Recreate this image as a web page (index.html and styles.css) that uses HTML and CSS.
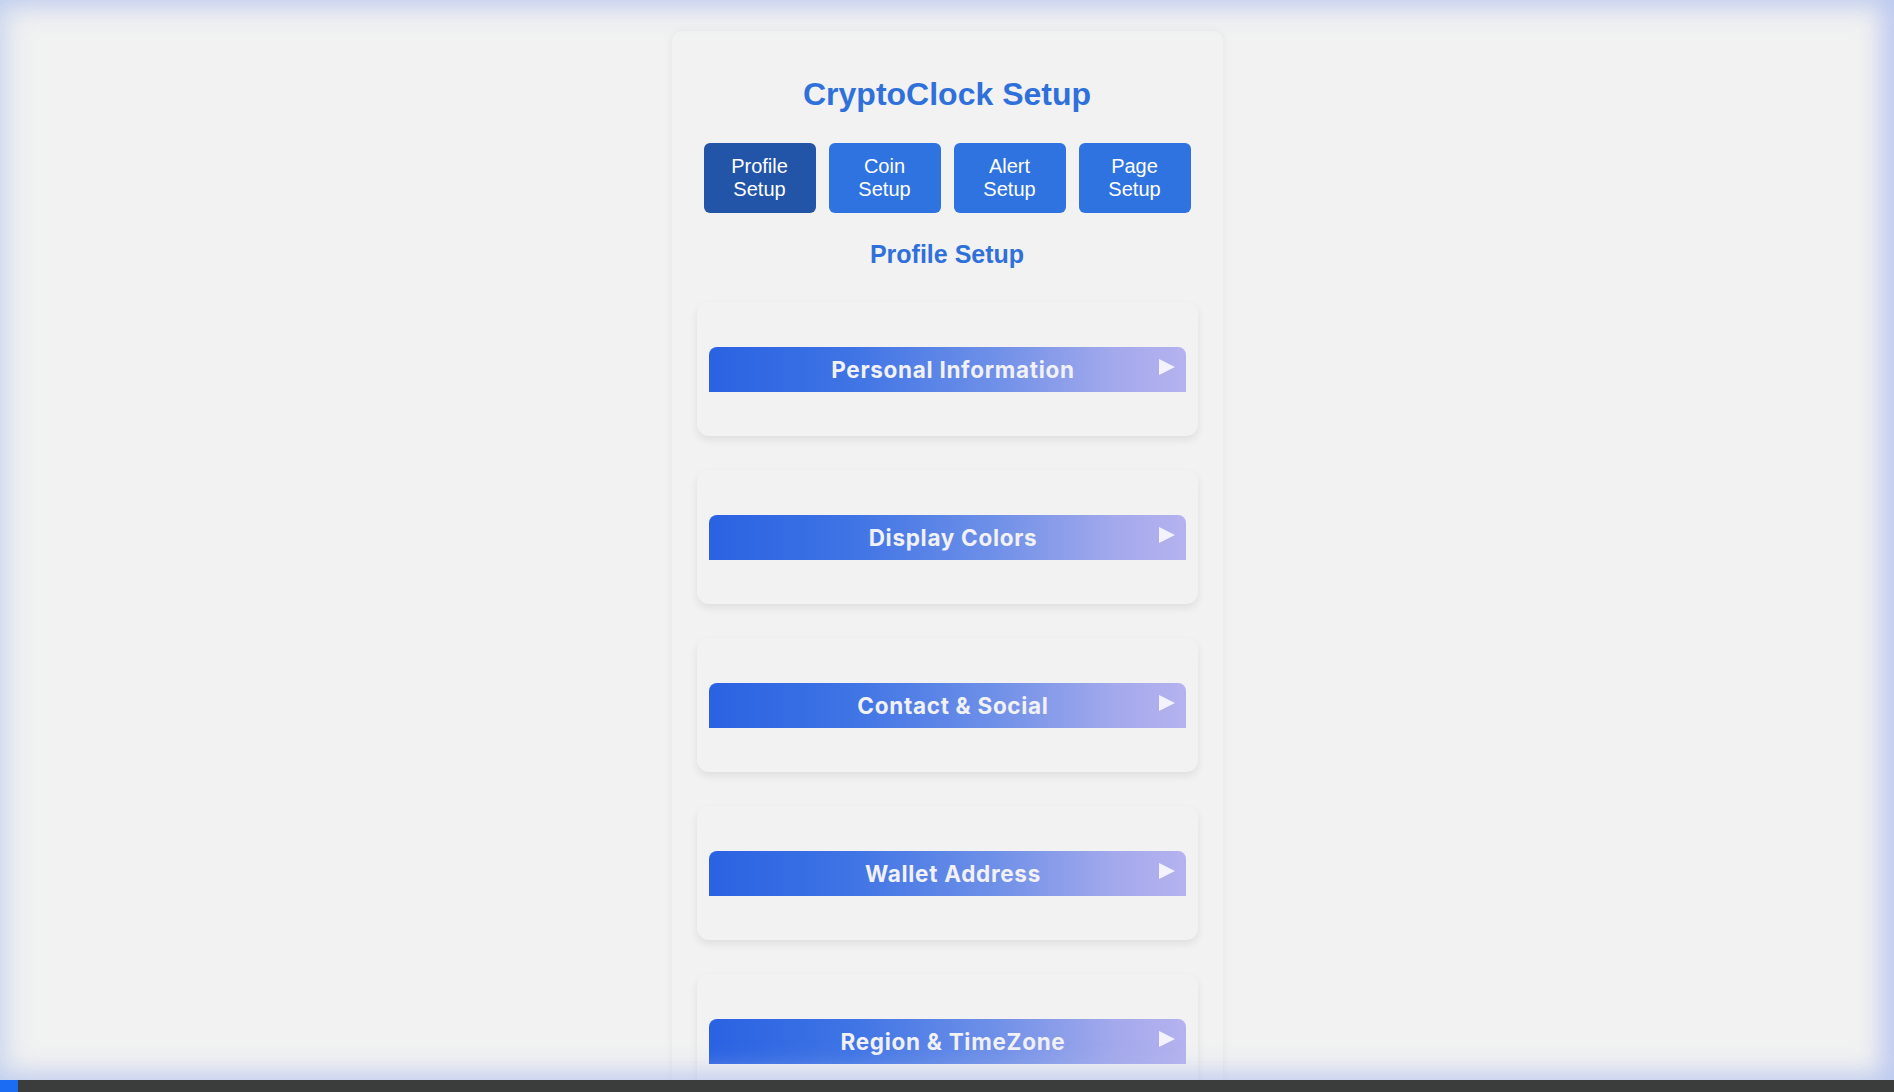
FILE: index.html
```html
<!DOCTYPE html>
<html lang="en">
<head>
<meta charset="utf-8">
<title>CryptoClock Setup</title>
<link rel="stylesheet" href="styles.css">
</head>
<body>
<div class="container">
  <h1 class="title">CryptoClock Setup</h1>
  <div class="tabs">
    <button class="tab active">Profile Setup</button>
    <button class="tab">Coin Setup</button>
    <button class="tab">Alert Setup</button>
    <button class="tab">Page Setup</button>
  </div>
  <h2 class="subtitle">Profile Setup</h2>
  <div class="cards">
    <section class="card"><div class="card-head"><span>Personal Information</span><svg class="arrow" viewBox="0 0 18 18"><polygon points="1,1 17,9 1,17"/></svg></div></section>
    <section class="card"><div class="card-head"><span>Display Colors</span><svg class="arrow" viewBox="0 0 18 18"><polygon points="1,1 17,9 1,17"/></svg></div></section>
    <section class="card"><div class="card-head"><span>Contact &amp; Social</span><svg class="arrow" viewBox="0 0 18 18"><polygon points="1,1 17,9 1,17"/></svg></div></section>
    <section class="card"><div class="card-head"><span>Wallet Address</span><svg class="arrow" viewBox="0 0 18 18"><polygon points="1,1 17,9 1,17"/></svg></div></section>
    <section class="card"><div class="card-head"><span>Region &amp; TimeZone</span><svg class="arrow" viewBox="0 0 18 18"><polygon points="1,1 17,9 1,17"/></svg></div></section>
  </div>
</div>
<div class="glow"></div>
<div class="statusbar"><div class="status-fill"></div></div>
</body>
</html>
```

FILE: styles.css
```css
html, body {
  margin: 0;
  padding: 0;
  background: #f2f2f2;
  height: 100%;
  overflow: hidden;
}
body {
  font-family: "Liberation Sans", Arial, sans-serif;
  padding-top: 31px;
  box-sizing: border-box;
}
.container {
  width: 551px;
  box-sizing: border-box;
  margin: 0 auto;
  padding: 45px 25px 40px;
  background: #f2f2f2;
  border-radius: 10px;
  box-shadow: 0 0 10px rgba(0, 0, 0, 0.06);
}
.title {
  margin: 0 0 30px;
  text-align: center;
  font-size: 32px;
  line-height: 37px;
  font-weight: bold;
  color: #2f70da;
}
.tabs {
  display: flex;
  justify-content: center;
  gap: 13px;
  margin-bottom: 27px;
}
.tab {
  width: 112px;
  height: 70px;
  border: none;
  border-radius: 6px;
  background: #2f73e0;
  color: #ffffff;
  font-family: "Liberation Sans", Arial, sans-serif;
  font-size: 20px;
  line-height: 23px;
  padding: 0 10px;
}
.tab.active {
  background: #2254a8;
}
.subtitle {
  margin: 0 0 33px;
  text-align: center;
  font-size: 25px;
  line-height: 29px;
  font-weight: bold;
  color: #2f70da;
}
.cards {
  display: flex;
  flex-direction: column;
  gap: 34px;
}
.card {
  background: #f2f2f2;
  border-radius: 12px;
  padding: 45px 12px 44px;
  box-shadow: 0 4px 8px rgba(0, 0, 0, 0.08);
}
.card-head {
  position: relative;
  height: 45px;
  border-radius: 8px 8px 0 0;
  background: linear-gradient(90deg, #2a62e2 0%, #3f74e5 30%, #6f90e8 60%, #a3a9ec 85%, #b5b2ef 100%);
  display: flex;
  align-items: center;
  justify-content: center;
  padding-left: 12px;
  color: #f1f1f6;
  font-family: Inter, "Noto Sans", sans-serif;
  font-weight: 700;
  font-size: 22.5px;
  letter-spacing: 0.7px;
}
.arrow {
  position: absolute;
  right: 10px;
  top: 11px;
  width: 18px;
  height: 18px;
  fill: rgba(255, 255, 255, 0.85);
}
.glow {
  position: fixed;
  left: 0;
  top: 0;
  right: 0;
  bottom: 12px;
  pointer-events: none;
  box-shadow: inset 0 0 30px 4px rgba(180, 200, 235, 0.7), inset -12px 0 22px rgba(170, 175, 245, 0.5);
}
.statusbar {
  position: fixed;
  left: 0;
  right: 0;
  bottom: 0;
  height: 12px;
  background: #3b3c3c;
}
.status-fill {
  width: 18px;
  height: 12px;
  background: #1b6cf2;
}
```
